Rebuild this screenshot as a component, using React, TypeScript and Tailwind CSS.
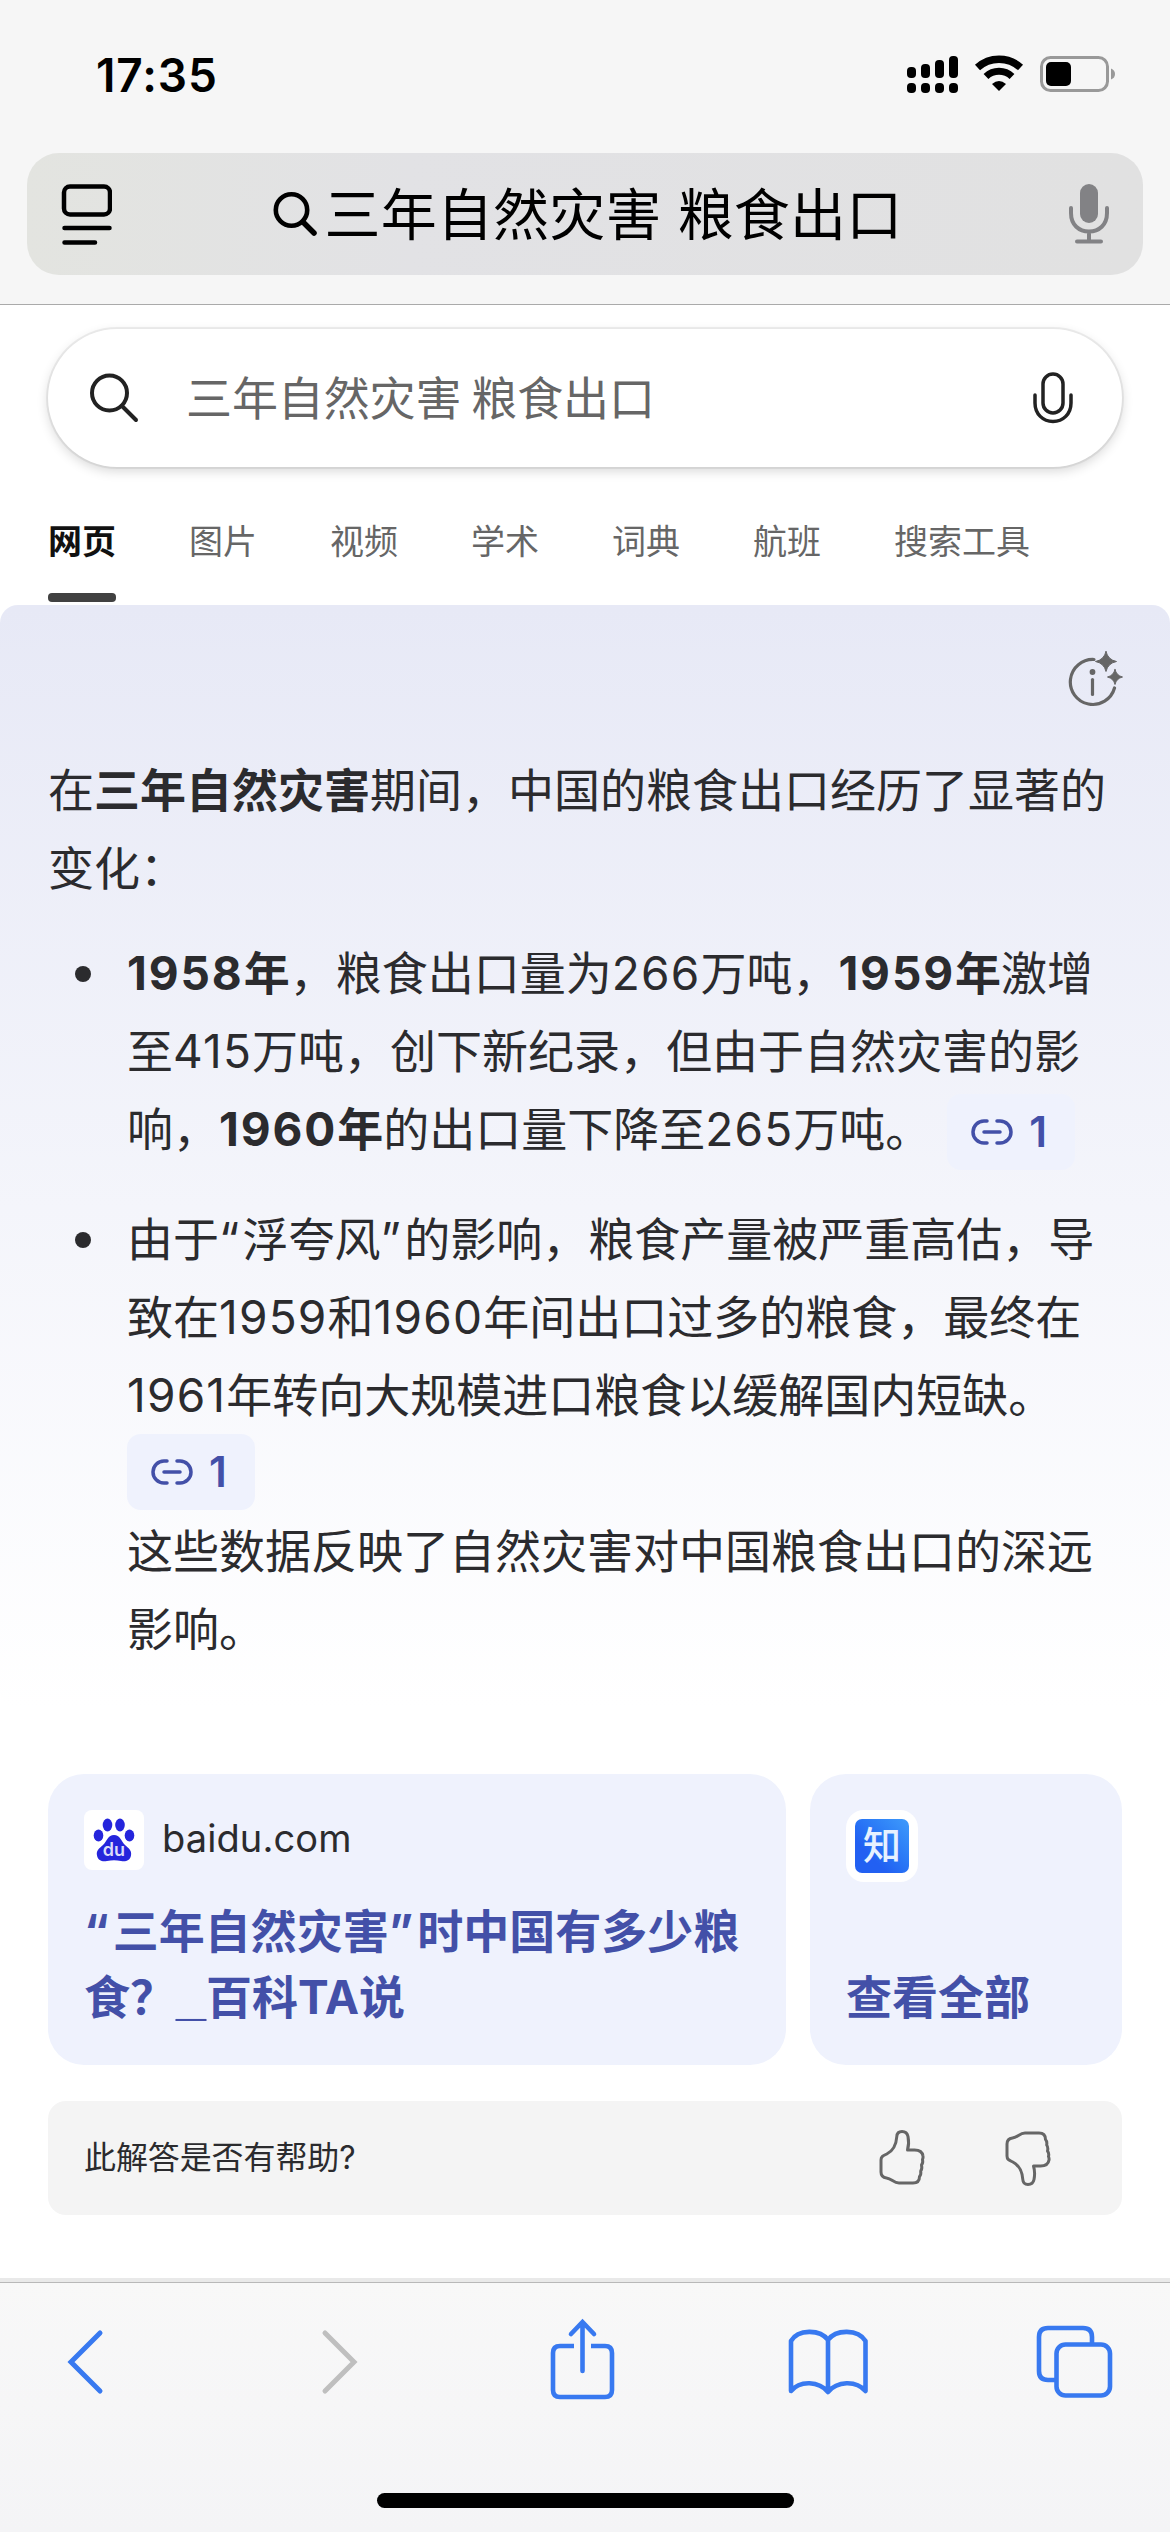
import { ReactNode } from 'react';

const tabs = ['网页', '图片', '视频', '学术', '词典', '航班', '搜索工具'];

function StatusBar() {
  return (
    <div className="flex h-[153px] items-start justify-between pt-[47px] pl-[96px] pr-[54px]">
      <div className="text-[46px] leading-[56px] font-semibold tracking-[0.9px]">17:35</div>
      <svg className="mt-[8px]" width="210" height="40" viewBox="0 0 210 40">
        <g>
          <rect x="1" y="12" width="9" height="11" rx="4" />
          <rect x="15" y="9" width="9" height="14" rx="4" />
          <rect x="29" y="5" width="9" height="18" rx="4" />
          <rect x="43" y="1" width="9" height="22" rx="4" />
          <rect x="1" y="28" width="9" height="10" rx="4" />
          <rect x="15" y="28" width="9" height="10" rx="4" />
          <rect x="29" y="28" width="9" height="10" rx="4" />
          <rect x="43" y="28" width="9" height="10" rx="4" />
        </g>
        <path d="M71.500 12.500A32 32 0 0 1 114.500 12.500" fill="none" stroke="#000" strokeWidth="7.500" />
        <path d="M80 21.500A19 19 0 0 1 106 21.500" fill="none" stroke="#000" strokeWidth="7" />
        <path d="M86 29Q93 23 100 29L93 36Z" />
        <rect x="135.500" y="2.500" width="66" height="33" rx="9" fill="none" stroke="#999" strokeWidth="3" />
        <rect x="140" y="7" width="25" height="24" rx="5" />
        <path d="M205 13.500q4 1.500 4 5.500t-4 5.500z" fill="#999" />
      </svg>
    </div>
  );
}

function AddressBar() {
  return (
    <div className="mx-[27px] flex h-[122px] items-center justify-between rounded-[32px] bg-linear-to-r from-[#e3e4e0] via-[#e2e2e5] via-35% to-[#e1e1e1] pl-[34px] pr-[34px]">
      <svg width="51" height="62" viewBox="0 0 51 62" fill="none" stroke="#000" strokeWidth="4.500" strokeLinecap="round">
        <rect x="3" y="3.500" width="46" height="28" rx="6" />
        <path d="M3.500 45H48.500M3.500 59.500H34" />
      </svg>
      <div className="-ml-[6px] flex items-center">
        <svg width="44" height="46" viewBox="0 0 44 46" fill="none" stroke="#000" strokeWidth="4.600" strokeLinecap="round">
          <circle cx="18.500" cy="19" r="15.700" />
          <path d="M30 31L41 42" strokeWidth="5.500" />
        </svg>
        <span className="ml-[8px] mt-[2px] text-[56px] leading-[80px] tracking-[0.2px]">三年自然灾害 粮食出口</span>
      </div>
      <svg width="40" height="60" viewBox="0 0 40 60" fill="none" stroke="#828285" strokeWidth="4" strokeLinecap="round">
        <rect x="11" y="0" width="18" height="39" rx="9" fill="#828285" stroke="none" />
        <path d="M2 24v5c0 12 8 18.500 18 18.500s18-6.500 18-18.500v-5M20 48v9M8 57.500H32" />
      </svg>
    </div>
  );
}

function SearchBox() {
  return (
    <div className="mx-[48px] mt-[24px] flex h-[138px] shrink-0 items-center rounded-full bg-white pl-[41px] pr-[49px] shadow-[0_0_0_2px_rgba(0,0,0,0.06),0_4px_12px_rgba(0,0,0,0.16)]">
      <svg width="52" height="52" viewBox="0 0 52 52" fill="none" stroke="#222" strokeWidth="4" strokeLinecap="round">
        <circle cx="20.500" cy="21" r="17.500" />
        <path d="M33 34L47 48" />
      </svg>
      <span className="ml-[45px] flex-1 text-[46px] leading-[64px] tracking-[-0.1px] [word-spacing:-3px] text-[#666]">三年自然灾害 粮食出口</span>
      <svg width="40" height="52" viewBox="0 0 40 52" fill="none" stroke="#222" strokeWidth="3.500" strokeLinecap="round">
        <rect x="10" y="2" width="20" height="39" rx="10" />
        <path d="M2 23v8c0 11 8 18.500 18 18.500s18-7.500 18-18.500v-8" />
      </svg>
    </div>
  );
}

function Tabs() {
  return (
    <div className="flex h-[138px] shrink-0 items-start gap-[73px] pl-[48px] pt-[50px]">
      {tabs.map((t, i) => (
        <div key={t} className={i === 0 ? 'flex flex-col font-bold text-[#111]' : 'text-[#666]'}>
          <span className="text-[34px] leading-[50px]">{t}</span>
          {i === 0 && <span className="mt-[26px] h-[9px] rounded-[4px] bg-[#414141]" />}
        </div>
      ))}
    </div>
  );
}

function Cite() {
  return (
    <span className="inline-flex h-[76px] w-[128px] shrink-0 items-center rounded-[14px] bg-[#eff2fd] pl-[24px] text-[#4350a8]">
      <svg width="42" height="26" viewBox="0 0 42 26" fill="none" stroke="#4350a8" strokeWidth="3.500" strokeLinecap="round">
        <path d="M16 2h-3a11 11 0 0 0 0 22h3M26 2h3a11 11 0 0 1 0 22h-3M13 13h16" />
      </svg>
      <b className="ml-[16px] text-[42px] leading-[50px] font-semibold">1</b>
    </span>
  );
}

function Num({ children }: { children: ReactNode }) {
  return <span className="tracking-[1.2px]">{children}</span>;
}

function Year({ children }: { children: ReactNode }) {
  return <b><span className="tracking-[1.9px]">{children}</span>年</b>;
}

function Bullet({ children }: { children: ReactNode }) {
  return (
    <li className="flex">
      <span className="mt-[32px] ml-[27px] h-[16px] w-[16px] shrink-0 rounded-full bg-[#2b2b2e]" />
      <div className="ml-[36px]">{children}</div>
    </li>
  );
}

function Answer() {
  return (
    <div className="h-[1103px] shrink-0 rounded-[18px] bg-linear-to-b from-[#e7e9f6] to-white px-[48px] text-[46px] leading-[78px] whitespace-nowrap text-[#2b2b2e]">
      <div className="flex h-[146px] justify-end pt-[46px]">
        <svg className="-mr-[2px]" width="56" height="58" viewBox="0 0 56 58" fill="none" stroke="#666" strokeWidth="3.200" strokeLinecap="round">
          <path d="M26 8.500A22.500 22.500 0 1 0 46.500 37" />
          <path d="M24.500 28.500v15" />
          <circle cx="24.500" cy="21" r="2.900" fill="#666" stroke="none" />
          <path fill="#666" stroke="#666" strokeWidth="1" strokeLinejoin="round" d="M38 0.500q1.800 8.200 10.500 10q-8.700 1.800-10.500 10q-1.800-8.200-10.500-10q8.700-1.800 10.500-10zM47 18.500q1.300 6 7.500 7.500q-6.200 1.500-7.500 7.500q-1.300-6-7.500-7.500q6.200-1.500 7.500-7.500z" />
        </svg>
      </div>
      <p>在<b>三年自然灾害</b>期间，中国的粮食出口经历了显著的<br />变化：</p>
      <ul className="mt-[27px] flex flex-col gap-[32px]">
        <Bullet>
          <Year>1958</Year>，粮食出口量为<Num>266</Num>万吨，<Year>1959</Year>激增<br />
          至<Num>415</Num>万吨，创下新纪录，但由于自然灾害的影<br />
          <div className="flex h-[78px] items-center">
            <span>响，<Year>1960</Year>的出口量下降至<Num>265</Num>万吨。</span>
            <span className="ml-[16px] mt-[5px] flex"><Cite /></span>
          </div>
        </Bullet>
        <Bullet>
          由于<span className="tracking-[3.3px]">“</span>浮夸风<span className="tracking-[3.3px]">”</span>的影响，粮食产量被严重高估，导<br />
          致在<Num>1959</Num>和<Num>1960</Num>年间出口过多的粮食，最终在<br />
          <Num>1961</Num>年转向大规模进口粮食以缓解国内短缺。
          <div className="flex h-[78px] items-start"><Cite /></div>
          这些数据反映了自然灾害对中国粮食出口的深远<br />
          影响。
        </Bullet>
      </ul>
    </div>
  );
}

function Sources() {
  return (
    <div className="mx-[48px] mt-[66px] flex h-[291px] shrink-0 gap-[24px] text-[46px] leading-[66px] font-bold whitespace-nowrap text-[#4350a8]">
      <div className="w-[738px] rounded-[36px] bg-[#eff2fd] pt-[36px] pl-[36px]">
        <div className="flex h-[60px] items-center">
          <span className="flex h-[60px] w-[60px] items-center justify-center rounded-[8px] bg-white">
            <svg width="42" height="44" viewBox="0 0 42 44" fill="#2525dc">
              <ellipse cx="14.500" cy="7" rx="4.800" ry="6.500" />
              <ellipse cx="27" cy="7" rx="4.800" ry="6.500" />
              <ellipse cx="5.500" cy="17.500" rx="4.800" ry="6" />
              <ellipse cx="36.500" cy="17.500" rx="4.800" ry="6" />
              <path d="M21 17c6 0 7 6 11 10c4 3.500 7 5.500 6 10.500c-1 6-6 6-10 5.500c-5-1-9-1-14 0c-4 .5-9 .5-10-5.500c-1-5 2-7 6-10.500c4-4 5-10 11-10z" />
              <text x="21" y="38" textAnchor="middle" fontSize="18" fontWeight="600" fill="#dcdcfa">du</text>
            </svg>
          </span>
          <span className="-mt-[4px] ml-[18px] text-[38px] leading-[56px] font-normal tracking-[0.1px] text-[#2b2b2e]">baidu.com</span>
        </div>
        <div className="mt-[28px]">
          <span className="tracking-[4px]">“</span>三年自然灾害<span className="tracking-[4px]">”</span>时中国有多少粮<br />
          食？<span className="font-['Liberation_Sans'] text-[54px] leading-none">_</span>百科TA说
        </div>
      </div>
      <div className="w-[312px] rounded-[36px] bg-[#eff2fd] pt-[36px] pl-[36px]">
        <div className="flex h-[72px] w-[72px] items-center justify-center rounded-[18px] bg-white">
          <span className="flex h-[54px] w-[54px] items-center justify-center rounded-[7px] bg-linear-to-bl from-[#3f9bfb] to-[#2260f2] to-70% pb-[2px] text-[38px] leading-[52px] font-medium text-[#e6f1ff]">知</span>
        </div>
        <div className="mt-[82px]">查看全部</div>
      </div>
    </div>
  );
}

const thumb = 'M23 1.500c-3.500 0-5 1.800-5.200 5c-.6 9-4 14.500-10 17.500c-3.800 1.900-5.800 2.500-5.800 6v12c0 4 1.800 5.500 5.500 6c5.500.8 7 5 12.500 5h14c5 0 6.500-3 6.500-6.500c1.500-1.500 1.500-3.500 1.200-5.500c1.400-2 1.300-4 .8-6c1.200-1.500 1.500-3.500 1-5.500c.6-1.500.7-2.500.5-3.500c-.6-4-3.500-6-8.500-6h-7c1.500-5 1.300-9.500.5-13.500c-.6-3-2.500-5-6-5z';

function Feedback() {
  return (
    <div className="mx-[48px] mt-[36px] flex h-[114px] shrink-0 items-center rounded-[18px] bg-[#f4f4f4] pl-[36px] pr-[71px]">
      <span className="flex-1 text-[32px] leading-[46px] tracking-[-0.1px] text-[#2b2b2e]">此解答是否有帮助?</span>
      <svg width="46" height="56" viewBox="0 0 46 56" fill="none" stroke="#666" strokeWidth="3" strokeLinejoin="round"><path d={thumb} /></svg>
      <svg className="ml-[80px] -scale-y-100" width="46" height="56" viewBox="0 0 46 56" fill="none" stroke="#666" strokeWidth="3" strokeLinejoin="round"><path d={thumb} /></svg>
    </div>
  );
}

function Toolbar() {
  return (
    <div className="mt-auto flex h-[254px] shrink-0 flex-col items-center border-t-4 border-[#e9e9e9] bg-linear-to-b from-[#f8f8f8] to-[#f4f4f6]">
      <div className="h-px w-full shrink-0 bg-[#b8b8b8]" />
      <svg className="shrink-0" width="1170" height="160" viewBox="0 0 1170 160" fill="none" stroke="#3879f0" strokeWidth="4.600" strokeLinecap="round">
        <path d="M100 50L71 79L100 108" strokeWidth="5" />
        <path d="M325 50L354 79L325 108" strokeWidth="5" stroke="#bfbfbf" />
        <path strokeLinecap="butt" d="M574 63H560Q553 63 553 70V107Q553 114 560 114H605Q612 114 612 107V70Q612 63 605 63H591" />
        <path d="M582.500 88V40M571 51L582.500 39L594 51" />
        <path strokeLinejoin="round" d="M828 56V108M828 57C820 46 798 46 791 58V108C800 97 819 98 828 109C837 98 856 97 865.500 108V58C858 46 836 46 828 57" />
        <path strokeLinecap="butt" d="M1055 97H1048Q1039 97 1039 88V54Q1039 45 1048 45H1083Q1092 45 1092 54V61" />
        <rect x="1056.500" y="61.500" width="53.500" height="51" rx="9" />
      </svg>
      <div className="mt-[50px] h-[15px] w-[417px] shrink-0 rounded-full bg-black" />
    </div>
  );
}

export default function App() {
  return (
    <div className="flex h-[2532px] w-[1170px] flex-col overflow-hidden bg-white font-[Inter,'Noto_Sans_CJK_SC',sans-serif] text-black">
      <header className="h-[305px] shrink-0 border-b border-[#aaaaaa] bg-[#f6f6f6]">
        <StatusBar />
        <AddressBar />
      </header>
      <SearchBox />
      <Tabs />
      <Answer />
      <Sources />
      <Feedback />
      <Toolbar />
    </div>
  );
}
